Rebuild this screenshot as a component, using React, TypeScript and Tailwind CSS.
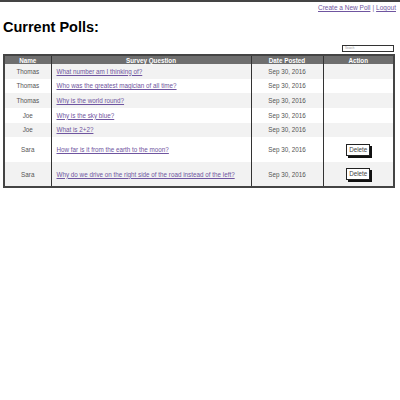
import React from "react";

const rows = [
  { name: "Thomas", q: "What number am I thinking of?", del: false },
  { name: "Thomas", q: "Who was the greatest magician of all time?", del: false },
  { name: "Thomas", q: "Why is the world round?", del: false },
  { name: "Joe", q: "Why is the sky blue?", del: false },
  { name: "Joe", q: "What is 2+2?", del: false },
  { name: "Sara", q: "How far is it from the earth to the moon?", del: true },
  { name: "Sara", q: "Why do we drive on the right side of the road instead of the left?", del: true },
];

export default function App() {
  return (
    <div className="w-[400px] h-[400px] bg-white border-t-2 border-[#444] font-['Liberation_Sans',Arial,sans-serif] text-[#333]">
      <div className="flex justify-end pr-[4px] pt-[2px] text-[6.5px] leading-[8px]">
        <a className="text-[#6f55a0] underline">Create a New Poll</a>
        <span className="px-[2px] text-[#6f55a0]">|</span>
        <a className="text-[#6f55a0] underline">Logout</a>
      </div>
      <h1 className="ml-[3px] mt-[7px] text-[14.5px] font-bold leading-[16px] text-black">Current Polls:</h1>
      <div className="flex justify-end pr-[6px] mt-[10px]">
        <div className="w-[52px] h-[7px] border border-[#333] bg-white text-[3px] leading-[5px] text-[#999] pl-[2px]">Search</div>
      </div>
      <table className="ml-[3px] mt-[2px] w-[392px] table-fixed border-collapse border-2 border-[#444] text-[6.3px]">
        <colgroup>
          <col className="w-[47px]" />
          <col className="w-[200px]" />
          <col className="w-[72px]" />
          <col />
        </colgroup>
        <thead>
          <tr className="bg-[#6e6e6e] text-white h-[9px]">
            <th className="font-bold leading-[7px] border-r border-[#333]">Name</th>
            <th className="font-bold leading-[7px] border-r border-[#333]">Survey Question</th>
            <th className="font-bold leading-[7px] border-r border-[#333]">Date Posted</th>
            <th className="font-bold leading-[7px]">Action</th>
          </tr>
        </thead>
        <tbody>
          {rows.map((r, i) => (
            <tr key={i} className={(i % 2 === 0 ? "bg-[#f2f2f2] " : "bg-white ") + (r.del ? "h-[25px]" : "h-[14.7px]")}>
              <td className="text-center text-[#555] border-r border-[#333]">{r.name}</td>
              <td className="pl-[5px] border-r border-[#333] whitespace-nowrap">
                <a className="text-[#6f55a0] underline">{r.q}</a>
              </td>
              <td className="text-center text-[#555] border-r border-[#333]">Sep 30, 2016</td>
              <td className="text-center">
                {r.del && (
                  <button className="inline-block bg-white border border-[#222] shadow-[2px_2px_0_#111] px-[2px] h-[12px] text-[6.3px] leading-[10px] text-[#444]">
                    Delete
                  </button>
                )}
              </td>
            </tr>
          ))}
        </tbody>
      </table>
    </div>
  );
}
